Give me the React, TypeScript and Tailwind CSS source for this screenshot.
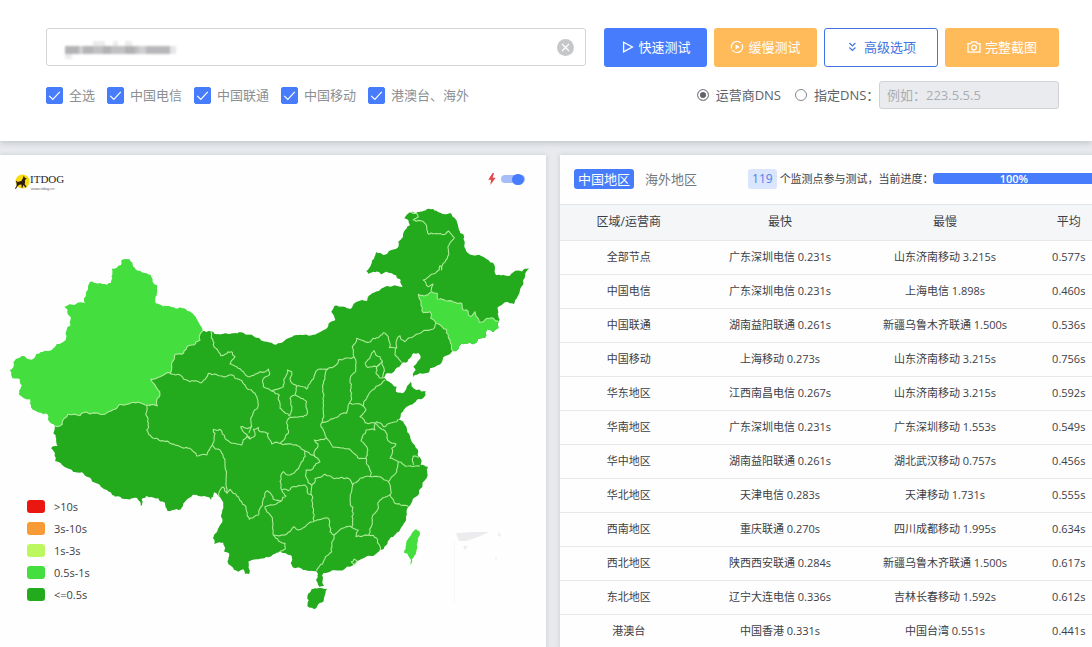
import React, { useState } from "react";

type Point = [number, number];

const parse = (text: string): Point[] =>
  text
    .trim()
    .split(/\s+/)
    .map((pair) => pair.split(",").map(Number) as Point);

/** Repeatable value in [-1, 1] for a segment, the same in either direction. */
const noise = (a: Point, b: Point, salt: number) => {
  const v = Math.sin((a[0] + b[0]) * 12.9898 + (a[1] + b[1]) * 78.233 + salt * 37.7) * 43758.5453;
  return (v - Math.floor(v)) * 2 - 1;
};

const split = (a: Point, b: Point): Point[] => {
  const length = Math.hypot(b[0] - a[0], b[1] - a[1]);
  if (length < 3) return [b];
  const amount = Math.min(length * 0.18, 1.5);
  const mid: Point = [
    Math.round(((a[0] + b[0]) / 2 + noise(a, b, 1) * amount) * 10) / 10,
    Math.round(((a[1] + b[1]) / 2 + noise(a, b, 2) * amount) * 10) / 10,
  ];
  return [...split(a, mid), ...split(mid, b)];
};

/** Gives straight segments the ragged look of a surveyed border. */
const toPath = (text: string, closed = false) => {
  const points = parse(text);
  if (closed) points.push(points[0]);
  const out: Point[] = [points[0]];
  for (let i = 1; i < points.length; i++) out.push(...split(points[i - 1], points[i]));
  return "M" + out.map((p) => p.join(",")).join("L") + (closed ? "Z" : "");
};

const XJ_TIBET =
  "55,426 62.3,424.3 67.7,414.3 80,415.7 86,412 90,414 100,414.3 115,409.3 120,404.3 133.3,402.3 143.3,404 146.7,405.3";
const XJ_EAST =
  "146.7,405.3 157.3,406 156.7,400 160,395 156,386.7 150.7,379.3 160,376.7 169.3,372.7 175,354.3 181.7,354.3 186.7,347.3 200,340 200,334.3 202.7,331";
const XJ_OUTER =
  "198.3,321.7 193.3,314 180,307.3 166.7,306 155.7,303.3 155.3,298.3 157,285 150.7,275 140,270.7 133.3,266.7 129.3,259 126,259 121.7,260 121,265 111.7,269 112.3,278.3 111,282.7 106.7,284.7 100,283 90,281.7 84,298.3 85.7,303.3 80,302.3 64.3,306.7 67.7,310 70.3,325.7 66.7,330 65.7,340 56.7,344 48.3,351 40.7,352 34,358.3 27.3,359 25.3,356.7 13.3,362.3 13.3,367.3 9.7,370 12.3,378.3 20,379.3 22,385.7 18.7,394 22,396.7 30,399.3 31,407.3 40,412.7 47.3,414 49.3,421.7";
const BODY =
  "210.7,331 213.3,332 230,334 243.3,332.7 255,337.3 261.7,340.7 276.7,344.3 296.7,335 313.3,334.7 320.7,331.7 328.3,324 335.3,320 331.3,311.7 334.7,305.7 350,309 356.7,301.7 367.3,300.7 373.3,292.7 383.3,287.7 393.3,285.7 402.7,286.7 400.7,280 391.7,273.3 386.7,271.7 381.7,274.3 375,272.3 368.3,274 366.3,271 376,252.3 383.3,255 391.7,250 397.7,247.7 398.3,241.7 405,230 410,225 408.3,220 404.3,218.3 410,212.3 433.3,209 445,214.3 451,213.3 455,218.3 458.3,226.7 464.3,236.7 464.3,246.7 468.3,253.3 483.3,256.7 493.3,263.3 496,275 510,275.7 513.3,272.3 530,267.7 525,276.7 520,290 514,304.3 505,302.3 497.7,307.3 498.7,321.7 498.3,328.3 493.3,332.3 487.3,329.3 486,336.7 478.3,339 473.3,344.3 466.7,343.7 461.7,343.3 458.3,349.3 452.7,351 448.3,355 443.3,357.3 438.3,365 430,368.3 428.3,372.7 420,373.3 413.3,377.3 412.7,374.3 415.7,370 413.3,366.7 420.7,356.7 418.3,353 413.3,353.3 410,358.3 403.3,362.3 399.3,366.7 393.3,372.3 386.7,373.3 384,377.7 389.3,381.7 396.7,386.7 396,391.7 401.7,393.3 405,391 410.7,382 415,389.3 425.7,391.3 424,397.3 416.7,400 408.3,406 401,413.3 398.3,419.3 405,425 411.7,441.7 418.3,451.7 420.7,465 427.7,466.7 427.3,473.3 422.3,486.7 418.3,495 408.3,507.3 406,516.7 401.7,526.7 390,538.3 380,550 373.3,556 363.3,558.3 357.3,560.7 353.3,565 343.3,570 330,571.7 323.3,573.3 322.7,580 324,586 319.3,586.7 316,580 316.7,571.7 311.7,570.7 305,570 295,568.3 290.7,563.3 291.7,556 290,555 280,551 276.7,552.7 268.3,557.3 256.7,559.3 248.3,561.7 249,574 245,574 243.3,569.3 238.3,571.7 234,570 228.3,564 229,553.3 224.3,551.7 223.3,542.7 214.3,544 214,535 218.3,528.3 222.3,521.7 223.3,503.3 219.3,496.7 214,492.3 211,500 206.7,496.7 196.7,495 185,501.7 181,509.3 167.3,510.7 165,502.7 158.3,498.3 146.7,496 141.7,499.3 140.7,506 137.3,498.3 128.3,499.3 115,496.7 106.7,490 100,485 91.7,480.7 81.7,472.3 73.3,472 55,461 54,451.7 51,448.3 57.7,446 53.3,433.3";

const JILIN_INNER =
  "452.7,351 448.3,335 446.7,330 436,323.3 430.7,318.3 430,311.7 423.3,312.7 421,301.7 418.3,294.3 424,296 431.7,291.7 437.3,293.3 437.3,299 446.7,301 461.7,303.3 463.3,310 468.3,311.7 470.7,316.7 475,311.7 479.3,322.3 486.7,318.3 493.3,318.3 498.7,321.7";
const JILIN_OUTER =
  "498.3,328.3 493.3,332.3 487.3,329.3 486,336.7 478.3,339 473.3,344.3 466.7,343.7 461.7,343.3 458.3,349.3";
const HAINAN = "311.7,589 319,588 327.7,588.3 323.3,601.7 315,609 307.3,606 307.3,596.7";
const TAIWAN = "416,529 419.3,531 417.3,546.7 410.7,565 409,557 404,552.7 406,545 411.7,533.3";

const BORDERS = [
  XJ_TIBET,
  XJ_EAST,
  JILIN_INNER,
  "410,212.3 416.7,213.3 418.3,216.7 413.3,220 425,223.3 429,234.3 445,234.3 448.3,231 454.3,237.7 449,245 447.3,258.3 441.7,270 440,265.7 423.3,280 428.3,286.7 433,284 430.7,291",
  "436,323.3 433.3,329 421.7,332.3 405,341.7 400,335.7 396.7,340 396.7,347.7 395,355 401.7,362.3",
  "396.7,347.7 389.3,347.7 388.3,336.7 383.3,332.7 378.3,337.7 365,341.7 356.7,338.3 352.3,346.7 354,356.7 356,363.3 353.3,373.3 350,380 351.7,393.3 349.3,403.3",
  "365,363.3 370,358.3 374,350.7 380,356.7 382.3,361 376.7,366.7 366.7,366.7 365,363.3",
  "382.3,361 384,368.3 383.3,377.7 379.3,377.7 376,373.3 376.7,366.7 380,364",
  "354,356.7 338.3,360 336,365 328.3,368.3 318.3,369.3 310,383.3 306.7,389 296.7,386 290.7,381.7 291.7,371.7 287.3,370 283.3,386.7 271.7,391 263.3,386.7 262.7,380 269.3,375 268.3,369 260,371.7 248.3,376.7 236.7,366.7 230,364 235,356.7 231.7,351.7 220.7,355.7 213.3,345 210.7,331",
  "328.3,368.3 323.3,381.7 324,395 321.7,422.7 326.7,438.3 314.3,440 318,444 314.3,451.7 315,456.7",
  "271.7,391 279.3,395 280,408.3 289.3,416 291.7,408.3 290,398.3 295,395 296.7,386",
  "295,395 306.7,401.7 306.7,415 289.3,418 288.3,433.3 281.7,441.7 280,443.3",
  "305,451 293.3,445 280,443.3 271.7,444 268.3,433.3 260,431.7 258.3,427.3 253.3,429.3 254,436.7 250,439 245,433.3 240.7,426.7 251.7,426.7",
  "250,439 247,436 241.7,445 233.3,443.3 225,438.3 220,429.3 213.3,429.3 212.3,445",
  "146.7,405.3 146.7,430 153.3,438.3 170,443.3 190,448.3 196.7,456 206.7,455 212.3,445",
  "169.3,372.7 180,375 190,381.7 201.7,382.7 208.3,373.3 221.7,376 230,375 245,385 255,393.3 258.3,405 251.7,416.7 251.7,426.7 249,433",
  "212.3,445 220,450 225,460 227,493.3 223,487 219.3,496.7",
  "227,493.3 230,489.3 233.3,493.3 241.7,501.7 249.3,519.3 258.3,515 263.3,498.3 267.3,490.7 271.7,495 273,499 281.7,500.7 273.3,505 265,506.7 266.7,511.7 271.7,516.7 273.3,535 278.3,540.7 285,543.3 285,549.3 280,551",
  "273.3,535 286.7,534 294,526.7 298.3,530 313.3,521.7 328.3,518.3 330,531.7 334,535 341.7,528.3 351.7,527.3 358.3,530 356,536.7 368.3,535 376.7,538.3 380,550",
  "281.7,500.7 286,496 281.7,490 288.3,490.7 296.7,486.7 305,485 308.3,494 311.7,495",
  "305,451 303.3,460 296.7,470 290,475 283.3,471.7 280,481.7 281.7,490",
  "305,451 315,456.7 320,461.7 313.3,468.3 306,470 306.7,478.3 311.7,485 312.7,496.7 312.3,506.7 314,521",
  "328.3,440 333.3,447.3 350,449.3 361.7,458.3 366,458.3 370,470 370.7,476.7 378.3,476.7 388.3,481.7 390,495 395,503.3 408.3,507",
  "326.7,438.3 328.3,440",
  "321.7,422.7 335,417.7 346.7,413.3 349.3,403.3 363.3,406 366.7,398.3 375,388.3 385,380",
  "363.3,406 366,410 360,416.7 365,422.7 375,423.3 376.7,421.7 383.3,426.7 391.7,422.7 398.3,419.3",
  "375,423.3 375,430 366,430 361,440.7 367.3,448.3 366,458.3",
  "375,423.3 385,430.7 389.3,441.7 396,444 391.7,448.3 390,458.3 398.3,461.7 408.3,466 420,466",
  "413.3,465 413.3,456 419,457.3",
  "398.3,461.7 396.7,471.7 388.3,481.7",
  "390,495 380,500 375,513.3 368.3,535",
  "311.7,485 315,478.3 325,474.3 333.3,478.3 348.3,478.3 352.7,485 360,478.3 370.7,476.7",
  "352.7,485 350,500 353.3,513.3 351.7,527.3",
  "334,535 331.7,551.7 323.3,561.7 316.7,571",
  "351,562 354,559 357,562 354,565 351,562",
];

const BODY_PATH = toPath(
  `${XJ_TIBET} ${XJ_EAST} ${BODY}`.replace("146.7,405.3 146.7,405.3", "146.7,405.3"),
  true,
);

function ChinaMap() {
  return (
    <svg viewBox="0 200 546 447" className="block w-full" role="img" aria-label="中国地图">
      <path d={BODY_PATH} fill="#23aa1d" />
      <path d={toPath(`${XJ_TIBET} ${XJ_EAST.slice(12)} ${XJ_OUTER}`, true)} fill="#44de3f" />
      <path d={toPath(`${JILIN_INNER} ${JILIN_OUTER}`, true)} fill="#44de3f" />
      <path d={toPath(HAINAN, true)} fill="#23aa1d" />
      <path d={toPath(TAIWAN, true)} fill="#44de3f" />
      <g fill="none" stroke="#aceb98" strokeWidth="1.1" strokeLinejoin="round">
        {BORDERS.map((line) => (
          <path key={line} d={toPath(line)} />
        ))}
      </g>
      <g fill="#ececef">
        <path d="M456 533L474 532 489 532 478 537 466 541 459 541Z" />
        <path d="M463 546L468 546 465 550Z M498 532L501 535 500 537 498 535Z" />
        <path d="M495 557h2v3h-2z" opacity=".5" />
        <path d="M454 541h1v62h-1z" opacity=".3" />
      </g>
    </svg>
  );
}

const LEGEND = [
  { color: "bg-[#e9170f]", label: ">10s" },
  { color: "bg-[#f89b36]", label: "3s-10s" },
  { color: "bg-[#bdf760]", label: "1s-3s" },
  { color: "bg-[#44de3f]", label: "0.5s-1s" },
  { color: "bg-[#23aa1d]", label: "<=0.5s" },
];

const ROWS = [
  ["全部节点", "广东深圳电信 0.231s", "山东济南移动 3.215s", "0.577s"],
  ["中国电信", "广东深圳电信 0.231s", "上海电信 1.898s", "0.460s"],
  ["中国联通", "湖南益阳联通 0.261s", "新疆乌鲁木齐联通 1.500s", "0.536s"],
  ["中国移动", "上海移动 0.273s", "山东济南移动 3.215s", "0.756s"],
  ["华东地区", "江西南昌电信 0.267s", "山东济南移动 3.215s", "0.592s"],
  ["华南地区", "广东深圳电信 0.231s", "广东深圳移动 1.553s", "0.549s"],
  ["华中地区", "湖南益阳联通 0.261s", "湖北武汉移动 0.757s", "0.456s"],
  ["华北地区", "天津电信 0.283s", "天津移动 1.731s", "0.555s"],
  ["西南地区", "重庆联通 0.270s", "四川成都移动 1.995s", "0.634s"],
  ["西北地区", "陕西西安联通 0.284s", "新疆乌鲁木齐联通 1.500s", "0.617s"],
  ["东北地区", "辽宁大连电信 0.336s", "吉林长春移动 1.592s", "0.612s"],
  ["港澳台", "中国香港 0.331s", "中国台湾 0.551s", "0.441s"],
];

const CARRIERS = ["全选", "中国电信", "中国联通", "中国移动", "港澳台、海外"];

function Icon({ children }: { children: React.ReactNode }) {
  return (
    <svg
      viewBox="0 0 14 14"
      className="size-[14px] shrink-0"
      fill="none"
      stroke="currentColor"
      strokeWidth="1.3"
      aria-hidden="true"
    >
      {children}
    </svg>
  );
}

function Logo() {
  return (
    <svg viewBox="0 0 54 18" className="h-[18px] w-[54px]" role="img" aria-label="ITDOG">
      <circle cx="8.5" cy="8.5" r="7" fill="#fbdc0e" />
      <path
        d="M9.8 2.5L10.6 4.6 12.6 5.4 12.2 6.3 10.9 6.7 11.1 9.5 10.6 11 12.6 14 11.6 14.4 9.2 11.9 8.6 14.8 7.6 14.8 7.5 11.5 5.2 11.7 3.4 13.6 1.8 16 1 15.6 2.6 12.8 2.6 10 1.8 8 2.4 7.8 3.6 9 7.4 8 8.8 5.5Z"
        fill="#2a1c12"
      />
      <text x="16" y="10" fontSize="11" fontFamily="Liberation Serif, serif" fill="#25252c">
        ITDOG
      </text>
      <text x="17" y="17" fontSize="4" fontFamily="Liberation Sans, sans-serif" fill="#6a6a70">
        www.itdog.cn
      </text>
    </svg>
  );
}

export default function App() {
  const [checked, setChecked] = useState(CARRIERS.map(() => true));
  const [dns, setDns] = useState("isp");
  const [fast, setFast] = useState(true);
  const button = "flex h-[39px] items-center justify-center gap-1 rounded-[3px] pb-[2px] text-[13px] leading-5";
  const radio =
    "size-3 appearance-none rounded-full border border-[#85888c] checked:bg-[#606367] checked:shadow-[inset_0_0_0_2px_#fff]";

  return (
    <div className="min-h-screen overflow-x-clip bg-[#e8eaee] font-['Open_Sans','Noto_Sans_CJK_SC',sans-serif] text-[#3c4046]">
      <header className="bg-white pt-7 pr-[33px] pb-8 pl-[46px] shadow-[0_2px_6px_rgba(60,65,75,0.22)]">
        <div className="flex gap-[18px]">
          <div className="relative flex-1">
            <input
              aria-label="网址"
              className="block h-[38px] w-full rounded-[3px] border border-[#d3d5d8] bg-white pr-10 pl-[18px] text-[13px] outline-none"
            />
            <svg
              viewBox="0 0 116 22"
              className="pointer-events-none absolute top-[11px] left-[17px] h-[22px] w-[116px] blur-[1px]"
              aria-hidden="true"
            >
              <path d="M2 7h14v8H2z" fill="#b3b3b5" />
              <path d="M16 7h4v8h-4z" fill="#d0d0d2" />
              <path d="M20 7h10v8H20z" fill="#b5b5b7" />
              <path d="M30 7h46v8H30z" fill="#c1c1c3" />
              <path d="M40 7h8v8h-8z M62 7h10v8H62z" fill="#b2b2b4" />
              <path d="M76 7h7v8h-7z" fill="#cfcfd1" />
              <path d="M83 7h24v8H83z" fill="#b8b8ba" />
              <path d="M107 7h6v8h-6z" fill="#e6e6e8" />
              <path d="M30 2h12v5H30z M50 2h5v5h-5z M62 2h7v5h-7z M2 15h7v5H2z" fill="#ececed" />
            </svg>
            <button aria-label="清除" className="absolute top-[11px] right-3 block">
              <svg viewBox="0 0 17 17" className="size-[17px]" fill="none">
                <circle cx="8.5" cy="8.5" r="8.5" fill="#c6c7c9" />
                <path d="M5 5l7 7M12 5l-7 7" stroke="#fff" strokeWidth="1.2" />
              </svg>
            </button>
          </div>
          <div className="flex gap-[7px]">
            <button className={`${button} w-[103px] bg-[#477dfd] text-white`}>
              <Icon>
                <path d="M3.6 2.2L12.4 7 3.6 11.8Z" />
              </Icon>
              快速测试
            </button>
            <button className={`${button} w-[103px] bg-[#ffba59] text-white`}>
              <Icon>
                <circle cx="7" cy="7" r="5.6" strokeDasharray="14 1.6" />
                <path d="M5.6 4.4L9.8 7 5.6 9.6Z" fill="currentColor" stroke="none" />
              </Icon>
              缓慢测试
            </button>
            <button className={`${button} w-[114px] border border-[#4274e0] bg-white text-[#4274e0]`}>
              <Icon>
                <path d="M3.4 3l3 3 3-3M3.4 7.5l3 3 3-3" strokeWidth="1.2" />
              </Icon>
              高级选项
            </button>
            <button className={`${button} w-[114px] bg-[#ffba59] text-white`}>
              <Icon>
                <path d="M1 3.6h2.8l.9-1.8h4.6l.9 1.8H13v8.6H1z" />
                <circle cx="7" cy="7.6" r="2.4" />
              </Icon>
              完整截图
            </button>
          </div>
        </div>

        <div className="mt-[14px] flex items-center justify-between text-[13px] leading-5">
          <div className="flex gap-3 text-[#8b8f94]">
            {CARRIERS.map((name, i) => (
              <label key={name} className="flex items-center gap-[6px]">
                <span className="relative block size-[17px]">
                  <input
                    type="checkbox"
                    checked={checked[i]}
                    onChange={() => setChecked(checked.map((c, j) => (j === i ? !c : c)))}
                    className="block size-[17px] appearance-none rounded-[2px] border border-[#477dfd] checked:bg-[#477dfd]"
                  />
                  <svg
                    viewBox="0 0 17 17"
                    className="pointer-events-none absolute inset-0 size-[17px]"
                    fill="none"
                    stroke="#fff"
                    strokeWidth="1.2"
                  >
                    <path d="M3.2 8.8l3.6 3.6 7-7.6" />
                  </svg>
                </span>
                {name}
              </label>
            ))}
          </div>
          <div className="flex items-center text-[#5d6166]">
            <label className="flex items-center gap-[7px]">
              <input type="radio" name="dns" checked={dns === "isp"} onChange={() => setDns("isp")} className={radio} />
              运营商DNS
            </label>
            <label htmlFor="custom" className="ml-[14px] flex items-center gap-[7px]">
              <input
                id="custom"
                type="radio"
                name="dns"
                checked={dns === "custom"}
                onChange={() => setDns("custom")}
                className={radio}
              />
              <span className="w-[65px] whitespace-nowrap">指定DNS：</span>
            </label>
            <input
              aria-label="指定DNS"
              disabled={dns !== "custom"}
              placeholder="例如：223.5.5.5"
              className="h-7 w-[180px] rounded-[3px] border border-[#d0d2d6] bg-[#e9ebee] px-[7px] text-[13px] placeholder:text-[#a9adb2]"
            />
          </div>
        </div>
      </header>

      <main className="mt-[14px] flex gap-[14px]">
        <section className="w-1/2 shrink-0 bg-[#fefefe] shadow-[0_0_5px_rgba(60,65,75,0.18)]">
          <div className="flex h-[45px] items-start justify-between pt-[18px] pr-[21px] pl-[14px]">
            <Logo />
            <label className="flex items-center gap-[5px]">
              <svg viewBox="0 0 8 12" className="h-3 w-2" aria-hidden="true">
                <path d="M4.6 0L0.3 6.8H3L2.4 12 7.6 4.8H4.7L6 0Z" fill="#e4474a" />
              </svg>
              <span className="relative flex h-[11px] w-6 items-center">
                <input
                  type="checkbox"
                  aria-label="快速模式"
                  checked={fast}
                  onChange={() => setFast(!fast)}
                  className="peer h-2 w-full appearance-none rounded-full bg-[#d5d8de] checked:bg-[#a5bdf8]"
                />
                <span className="pointer-events-none absolute top-0 left-0 h-[11px] w-3 rounded-full bg-[#477dfd] peer-checked:left-[11px]" />
              </span>
            </label>
          </div>
          <div className="relative">
            <ChinaMap />
            <ul className="absolute top-[300px] left-[27px] flex flex-col gap-[9px] text-[11px]">
              {LEGEND.map(({ color, label }) => (
                <li key={label} className="flex h-[13px] items-center gap-[9px]">
                  <span className={`h-[13px] w-[18px] rounded-[3px] ${color}`} />
                  <span className="leading-[13px]">{label}</span>
                </li>
              ))}
            </ul>
          </div>
        </section>

        <section className="-mr-[18px] flex-1 bg-[#fefefe] shadow-[0_0_5px_rgba(60,65,75,0.18)]">
          <div className="flex h-[50px] items-center border-b border-[#e3e5e9] pr-[15px] pb-[2px] pl-[14px]">
            <nav className="flex gap-[7px] text-[13px] leading-5">
              <a href="#china" className="rounded-[3px] bg-[#477dfd] px-1 text-white">
                中国地区
              </a>
              <a href="#overseas" className="px-1 text-[#74787d]">
                海外地区
              </a>
            </nav>
            <span className="ml-[47px] rounded-[3px] bg-[#dae5fe] px-1 text-[12px] leading-5 text-[#5180ec]">119</span>
            <span className="ml-[3px] w-[153px] shrink-0 whitespace-nowrap text-[11px] leading-5">
              个监测点参与测试，当前进度：
            </span>
            <div
              role="progressbar"
              aria-label="当前进度"
              aria-valuenow={100}
              className="h-[11px] flex-1 rounded-[3px] bg-[#477dfd] text-center text-[11px] leading-[11px] font-semibold text-white"
            >
              100%
            </div>
          </div>
          <table className="w-full table-fixed border-collapse text-center text-[11px]">
            <colgroup>
              <col className="w-1/4" />
              <col className="w-[30%]" />
              <col className="w-[30%]" />
              <col />
            </colgroup>
            <thead>
              <tr className="h-[35px] border-b border-[#e6e8eb] bg-[#f5f6f8] text-[12px]">
                {["区域/运营商", "最快", "最慢", "平均"].map((title) => (
                  <th key={title} className="font-normal">
                    {title}
                  </th>
                ))}
              </tr>
            </thead>
            <tbody>
              {ROWS.map((row) => (
                <tr key={row[0]} className="h-[34px] border-b border-[#e6e8eb]">
                  {row.map((cell, i) => (
                    <td key={i} className="whitespace-nowrap">
                      {cell}
                    </td>
                  ))}
                </tr>
              ))}
            </tbody>
          </table>
        </section>
      </main>
    </div>
  );
}
